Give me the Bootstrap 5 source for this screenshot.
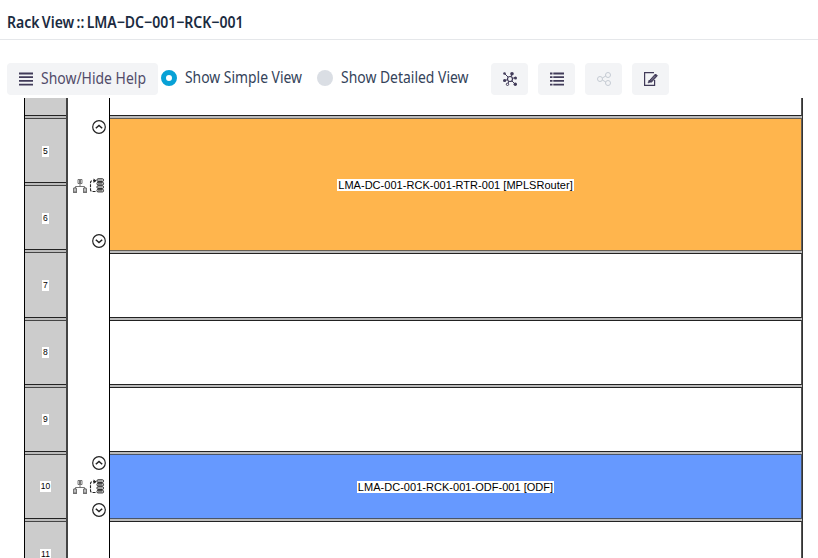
<!DOCTYPE html>
<html lang="en">
<head>
<meta charset="utf-8">
<meta name="viewport" content="width=device-width, initial-scale=1">
<title>Rack View</title>
<link href="https://cdn.jsdelivr.net/npm/bootstrap@5.3.0/dist/css/bootstrap.min.css" rel="stylesheet">
<style>
body{font-family:"Noto Sans","Open Sans",sans-serif;color:#34435a;height:558px;overflow:hidden;background:#fff}
.page-head{height:40px;border-bottom:1px solid #e5e7ea;padding:4px 0 0 7px}
.page-head h1{font-size:15px;font-weight:600;line-height:36px;color:#1b2b41;margin:0}
.fit{display:block;overflow:visible}
.fit text{font-family:"Noto Sans","Open Sans",sans-serif}
.tight{word-spacing:-1.5px}
.tools{height:58px;padding:23px 0 0 7px}
.tool{background:#f3f4f6;border:0;border-radius:4px;height:32px;padding:0;color:#413b59}
.tool-help{width:151px;padding-left:12px}
.tool-icon{width:37px;margin-right:10px}
.dot{width:16px;height:16px;border-radius:50%;background:#dadee4}
.dot.on{background:#fff;border:5px solid #08a1d6}
.rack{height:460px;overflow:hidden;padding-left:24px}
.units{width:44px;background:#bbb;border-left:1px solid #000;border-right:2px solid #444}
.unit{background:#ccc;border-top:1px solid #444;border-bottom:1px solid #222;margin-bottom:2px;height:65px;flex:none;font:8.5px/12px "Liberation Sans",sans-serif;color:#000}
.unit.first,.slot.first{height:18px;border-top:0}
.unit span{background:#fff;padding:0 1px;min-width:7px;height:11px;line-height:11px}
.unit.low span{margin-top:2px}
.acts{width:41px}
.slots{width:694px;background:#bbb;border-left:1px solid #000;border-right:1px solid #333}
.slot{background:#fff;border-top:1px solid #222;border-bottom:1px solid #222;border-right:1px solid #555;margin-bottom:2px;height:65px;flex:none;font:11px/13px "Liberation Sans",sans-serif;color:#000}
.slot.router{height:133px;background:#ffb54d;border-color:#665f55}
.slot.odf{background:#69f;border-color:#4a5568}
.slot span{background:#fff;height:12px;line-height:13px;padding:0 1px;letter-spacing:.03px}
.unit.tall{height:66px}
.odf span{margin-top:1px}
.act-group{position:relative;height:133px}
.act-group.small-group{height:66px}
.up,.down,.pair{position:absolute}
.up,.down{left:24px;width:14px;height:14px}
.up{top:2px}.down{bottom:3px}
.pair{left:5px;width:32px;height:15px}
</style>
<script src="https://cdn.jsdelivr.net/npm/bootstrap@5.3.0/dist/js/bootstrap.bundle.min.js"></script>
</head>
<body>
<svg width="0" height="0" class="position-absolute">
<defs>
<g id="up-icon" fill="none" stroke="#222"><circle cx="7" cy="7" r="6.3" stroke-width="1.2"/><path d="M3.800 8.300 7 5.500 10.200 8.300" stroke-width="1.500"/></g>
<g id="pair-icon" fill="none" stroke="#666" stroke-width=".9">
<path d="M5 1.500h4v4H5zM6.500 2v3M7.500 2v3M7 6v2.500M2.500 10V8.500h9V10"/>
<path d="M.500 10h3v4h-3zM10.500 10h3v4h-3zM2 9v5M12 9v5M0 14.500h4M10 14.500h4"/>
<path d="M23 2.700h-3.500q-2 0-2 2v6.800q0 2 2 2h4" stroke="#222" stroke-width="1.100" stroke-dasharray="3 1"/><path d="m20.500 .5 3 2.200-3 2.200z" fill="#222" stroke="none"/>
<g stroke="#222" stroke-width="1"><rect x="24" y=".8" width="6.500" height="2.600" rx="1"/><rect x="24" y="4.300" width="6.500" height="2.600" rx="1"/><rect x="24" y="7.800" width="6.500" height="2.600" rx="1"/><rect x="24" y="11.300" width="6.500" height="2.600" rx="1"/><path d="M25 2.100h4.500M25 5.600h4.500M25 9.100h4.500M25 12.600h4.500" stroke="#777"/></g>
</g>
</defs>
</svg>
<header class="page-head"><h1><svg class="fit" width="237" height="36"><text class="tight" x="0" y="24" font-size="16" font-weight="600" fill="#1b2b41" textLength="236.500" lengthAdjust="spacingAndGlyphs">Rack View :: LMA−DC−001−RCK−001</text></svg></h1></header>
<div class="tools d-flex align-items-start">
<button class="tool tool-help d-flex align-items-center">
<svg width="14" height="14" stroke="#413b59" stroke-width="1.800"><path d="M0 1.500h14M0 5.200h14M0 8.900h14M0 12.600h14"/></svg>
<svg class="fit ms-2" width="105" height="32"><text x="0" y="21" font-size="16" fill="#514b69" textLength="105" lengthAdjust="spacingAndGlyphs">Show/Hide Help</text></svg>
</button>
<div class="d-flex" style="padding:7px 0 0 3px"><span class="dot on"></span><svg class="fit" width="117" height="18" style="margin-left:8px"><text y="13" font-size="16" fill="#34435a" textLength="117" lengthAdjust="spacingAndGlyphs">Show Simple View</text></svg></div>
<div class="d-flex" style="padding:7px 0 0 15px"><span class="dot"></span><svg class="fit" width="127" height="18" style="margin-left:8px"><text y="13" font-size="16" fill="#34435a" textLength="127.500" lengthAdjust="spacingAndGlyphs">Show Detailed View</text></svg></div>
<div class="d-flex" style="margin-left:23px">
<button class="tool tool-icon d-flex align-items-center justify-content-center"><svg width="14" height="14" fill="#413b59" stroke="#413b59"><path d="M1.500 1.500 7 7M9 2 7 7M12.500 5.500 7 7M1.500 8.500 7 7M12.500 12.500 7 7M4.500 12.500 7 7" fill="none"/><circle cx="7" cy="7" r="2.500" fill="#f3f4f6" stroke-width="1.200"/><g stroke="none"><circle cx="1.500" cy="1.500" r="1.300"/><circle cx="9" cy="1.800" r="1.800"/><circle cx="12.500" cy="6" r="1.500"/><circle cx="1.600" cy="8.500" r="1.600"/><circle cx="12.300" cy="12.300" r="1.700"/></g><circle cx="4.500" cy="12.300" r="1.200" fill="#f3f4f6"/></svg></button>
<button class="tool tool-icon d-flex align-items-center justify-content-center"><svg width="14" height="14" stroke="#413b59" stroke-width="1.800"><path d="M0 1.500h2.500M3.300 1.500h10.700M0 5.200h2.500M3.300 5.200h10.700M0 8.900h2.500M3.300 8.900h10.700M0 12.600h2.500M3.300 12.600h10.700"/></svg></button>
<button class="tool tool-icon d-flex align-items-center justify-content-center"><svg width="14" height="14" fill="none" stroke="#c5cbd3"><circle cx="3" cy="7" r="2.500"/><circle cx="11" cy="3" r="2.500"/><circle cx="11" cy="11" r="2.500"/><path d="m5.300 6 3.500-2M5.300 8l3.500 2"/></svg></button>
<button class="tool tool-icon d-flex align-items-center justify-content-center"><svg width="14" height="14" class="overflow-visible" fill="none" stroke="#413b59"><path d="M10 .600H.600v12.800h10V8" stroke-width="1.200"/><path d="m5.500 8.500 6-6.500 1.800 1.800-6 6.500z" fill="#413b59"/><path d="m4 11 1-3 2 2z" fill="#413b59" stroke-width=".5"/><path d="m7 8.500 4.300-4.500" stroke="#b8b8c4" stroke-width=".6"/></svg></button>
</div>
</div>
<main class="rack d-flex">
<div class="units d-flex flex-column">
<div class="unit first"></div>
<div class="unit low d-flex align-items-center justify-content-center"><span>5</span></div>
<div class="unit low d-flex align-items-center justify-content-center"><span>6</span></div>
<div class="unit tall d-flex align-items-center justify-content-center"><span>7</span></div>
<div class="unit d-flex align-items-center justify-content-center"><span>8</span></div>
<div class="unit d-flex align-items-center justify-content-center"><span>9</span></div>
<div class="unit d-flex align-items-center justify-content-center"><span>10</span></div>
<div class="unit low d-flex align-items-center justify-content-center"><span>11</span></div>
</div>
<div class="acts" style="padding-top:20px">
<div class="act-group"><svg class="up"><use href="#up-icon"/></svg><svg class="pair" style="top:60px"><use href="#pair-icon"/></svg><svg class="down"><use href="#up-icon" transform="rotate(180 7 7)"/></svg></div>
<div class="act-group small-group" style="margin-top:203px"><svg class="up"><use href="#up-icon"/></svg><svg class="pair" style="top:25px"><use href="#pair-icon"/></svg><svg class="down"><use href="#up-icon" transform="rotate(180 7 7)"/></svg></div>
</div>
<div class="slots d-flex flex-column">
<div class="slot first"></div>
<div class="slot router d-flex align-items-center justify-content-center"><span>LMA-DC-001-RCK-001-RTR-001 [MPLSRouter]</span></div>
<div class="slot"></div>
<div class="slot"></div>
<div class="slot"></div>
<div class="slot odf d-flex align-items-center justify-content-center"><span>LMA-DC-001-RCK-001-ODF-001 [ODF]</span></div>
<div class="slot"></div>
</div>
</main>
</body>
</html>
